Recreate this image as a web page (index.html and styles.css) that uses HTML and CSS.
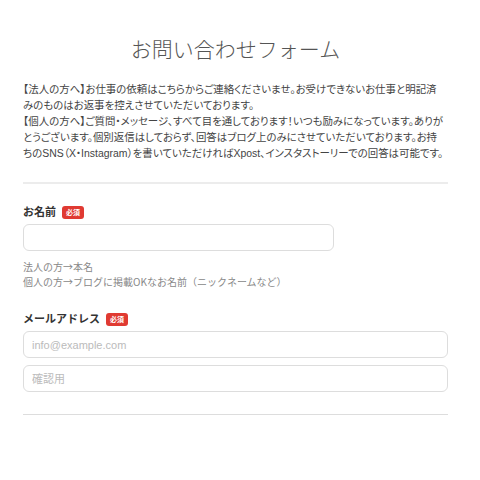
FILE: index.html
```html
<!DOCTYPE html>
<html lang="ja">
<head>
  <meta charset="utf-8">
  <title>お問い合わせフォーム</title>
  <link rel="stylesheet" href="styles.css">
</head>
<body>
  <div class="contact">
    <h1 class="contact-title">お問い合わせフォーム</h1>

    <p class="contact-lead">【法人の方へ】お仕事の依頼はこちらからご連絡くださいませ。お受けできないお仕事と明記済<br>みのものはお返事を控えさせていただいております。<br>【個人の方へ】ご質問・メッセージ、すべて目を通しております！いつも励みになっています。ありが<br>とうございます。個別返信はしておらず、回答はブログ上のみにさせていただいております。お持<br>ちのSNS（X・Instagram）を書いていただければXpost、インスタストーリーでの回答は可能です。</p>

    <hr class="divider divider-top">

    <form class="contact-form">
      <div class="field">
        <label class="field-label" for="name">お名前 <span class="required">必須</span></label>
        <input class="field-input field-input-short" id="name" type="text">
        <p class="field-note">法人の方→本名<br>個人の方→ブログに掲載OKなお名前（ニックネームなど）</p>
      </div>

      <div class="field">
        <label class="field-label" for="email">メールアドレス <span class="required">必須</span></label>
        <input class="field-input" id="email" type="email" placeholder="info@example.com">
        <input class="field-input" id="email-confirm" type="email" placeholder="確認用">
      </div>
    </form>

    <hr class="divider">
  </div>
</body>
</html>
```

FILE: styles.css
```css
body {
  margin: 0;
  padding: 0;
  background-color: #fff;
  font-family: "Liberation Sans", "Noto Sans CJK JP", sans-serif;
  color: #444;
}

.contact {
  width: 425px;
  margin: 0 0 0 23px;
}

.contact-title {
  margin: 0;
  padding-top: 36px;
  font-size: 21px;
  font-weight: 300;
  line-height: 28px;
  text-align: center;
  color: #555;
}

.contact-lead {
  margin: 18px 0 0;
  font-size: 10.45px;
  line-height: 16px;
  color: #444;
  white-space: nowrap;
  font-feature-settings: "palt";
}

.divider {
  margin: 0;
  border: none;
  border-top: 1px solid #ddd;
}

.divider-top {
  margin-top: 20px;
  border-top: 2px solid #ececec;
}

.contact-form {
  padding-top: 20px;
}

.field {
  display: flex;
  flex-direction: column;
  align-items: flex-start;
  gap: 7px;
  margin-bottom: 22px;
}

.field-label {
  display: flex;
  align-items: center;
  gap: 6px;
  margin-bottom: -3px;
  font-size: 11px;
  font-weight: bold;
  color: #333;
  line-height: 16px;
}

.required {
  display: inline-block;
  padding: 0 4px;
  border-radius: 3px;
  background-color: #e03a32;
  color: #fff;
  font-size: 7px;
  line-height: 13px;
  font-weight: bold;
}

.field-input {
  box-sizing: border-box;
  width: 100%;
  height: 27px;
  padding: 0 8px;
  border: 1px solid #ddd;
  border-radius: 6px;
  font-family: inherit;
  font-size: 11px;
  color: #333;
}

.field-input::placeholder {
  color: #bbb;
}

.field-input-short {
  width: 311px;
}

.field-note {
  margin: 1px 0 0;
  font-family: "Noto Sans CJK JP", sans-serif;
  font-size: 10px;
  line-height: 15px;
  color: #888;
}
```
